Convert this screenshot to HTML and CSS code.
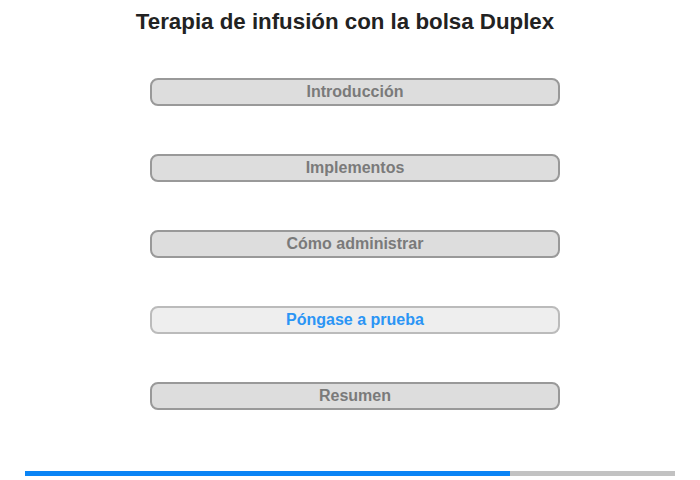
FILE: index.html
```html
<!DOCTYPE html>
<html lang="es">
<head>
<meta charset="utf-8">
<title>Terapia de infusión con la bolsa Duplex</title>
<link rel="stylesheet" href="styles.css">
</head>
<body>
<h1 class="titulo">Terapia de infusión con la bolsa Duplex</h1>
<div class="menu">
  <button class="menu-btn">Introducción</button>
  <button class="menu-btn">Implementos</button>
  <button class="menu-btn">Cómo administrar</button>
  <button class="menu-btn activo">Póngase a prueba</button>
  <button class="menu-btn">Resumen</button>
</div>
<div class="progreso"><div class="progreso-barra" style="width: 74.6%"></div></div>
</body>
</html>
```

FILE: styles.css
```css
* {font-family: "Liberation Sans", Arial, sans-serif; box-sizing: border-box;}
body {margin: 0; background: #fff;}
.titulo {font-size: 22.3px; font-weight: bold; color: #222; margin: 0; padding: 9px 10px 0 0; height: 78px; text-align: center;}
.menu {display: flex; flex-direction: column; gap: 48px; padding-left: 150px;}
.menu-btn {width: 410px; height: 28px; border: 2px solid #999; border-radius: 8px; background: #ddd; color: #7a7a7a; font-size: 16px; font-weight: bold; padding: 0; cursor: pointer;}
.menu-btn.activo {background: #eee; border-color: #bbb; color: #2b95f5;}
.progreso {margin: 61px 25px 0; height: 5px; background: #c2c2c2;}
.progreso-barra {height: 100%; background: #0a84f5;}
```
